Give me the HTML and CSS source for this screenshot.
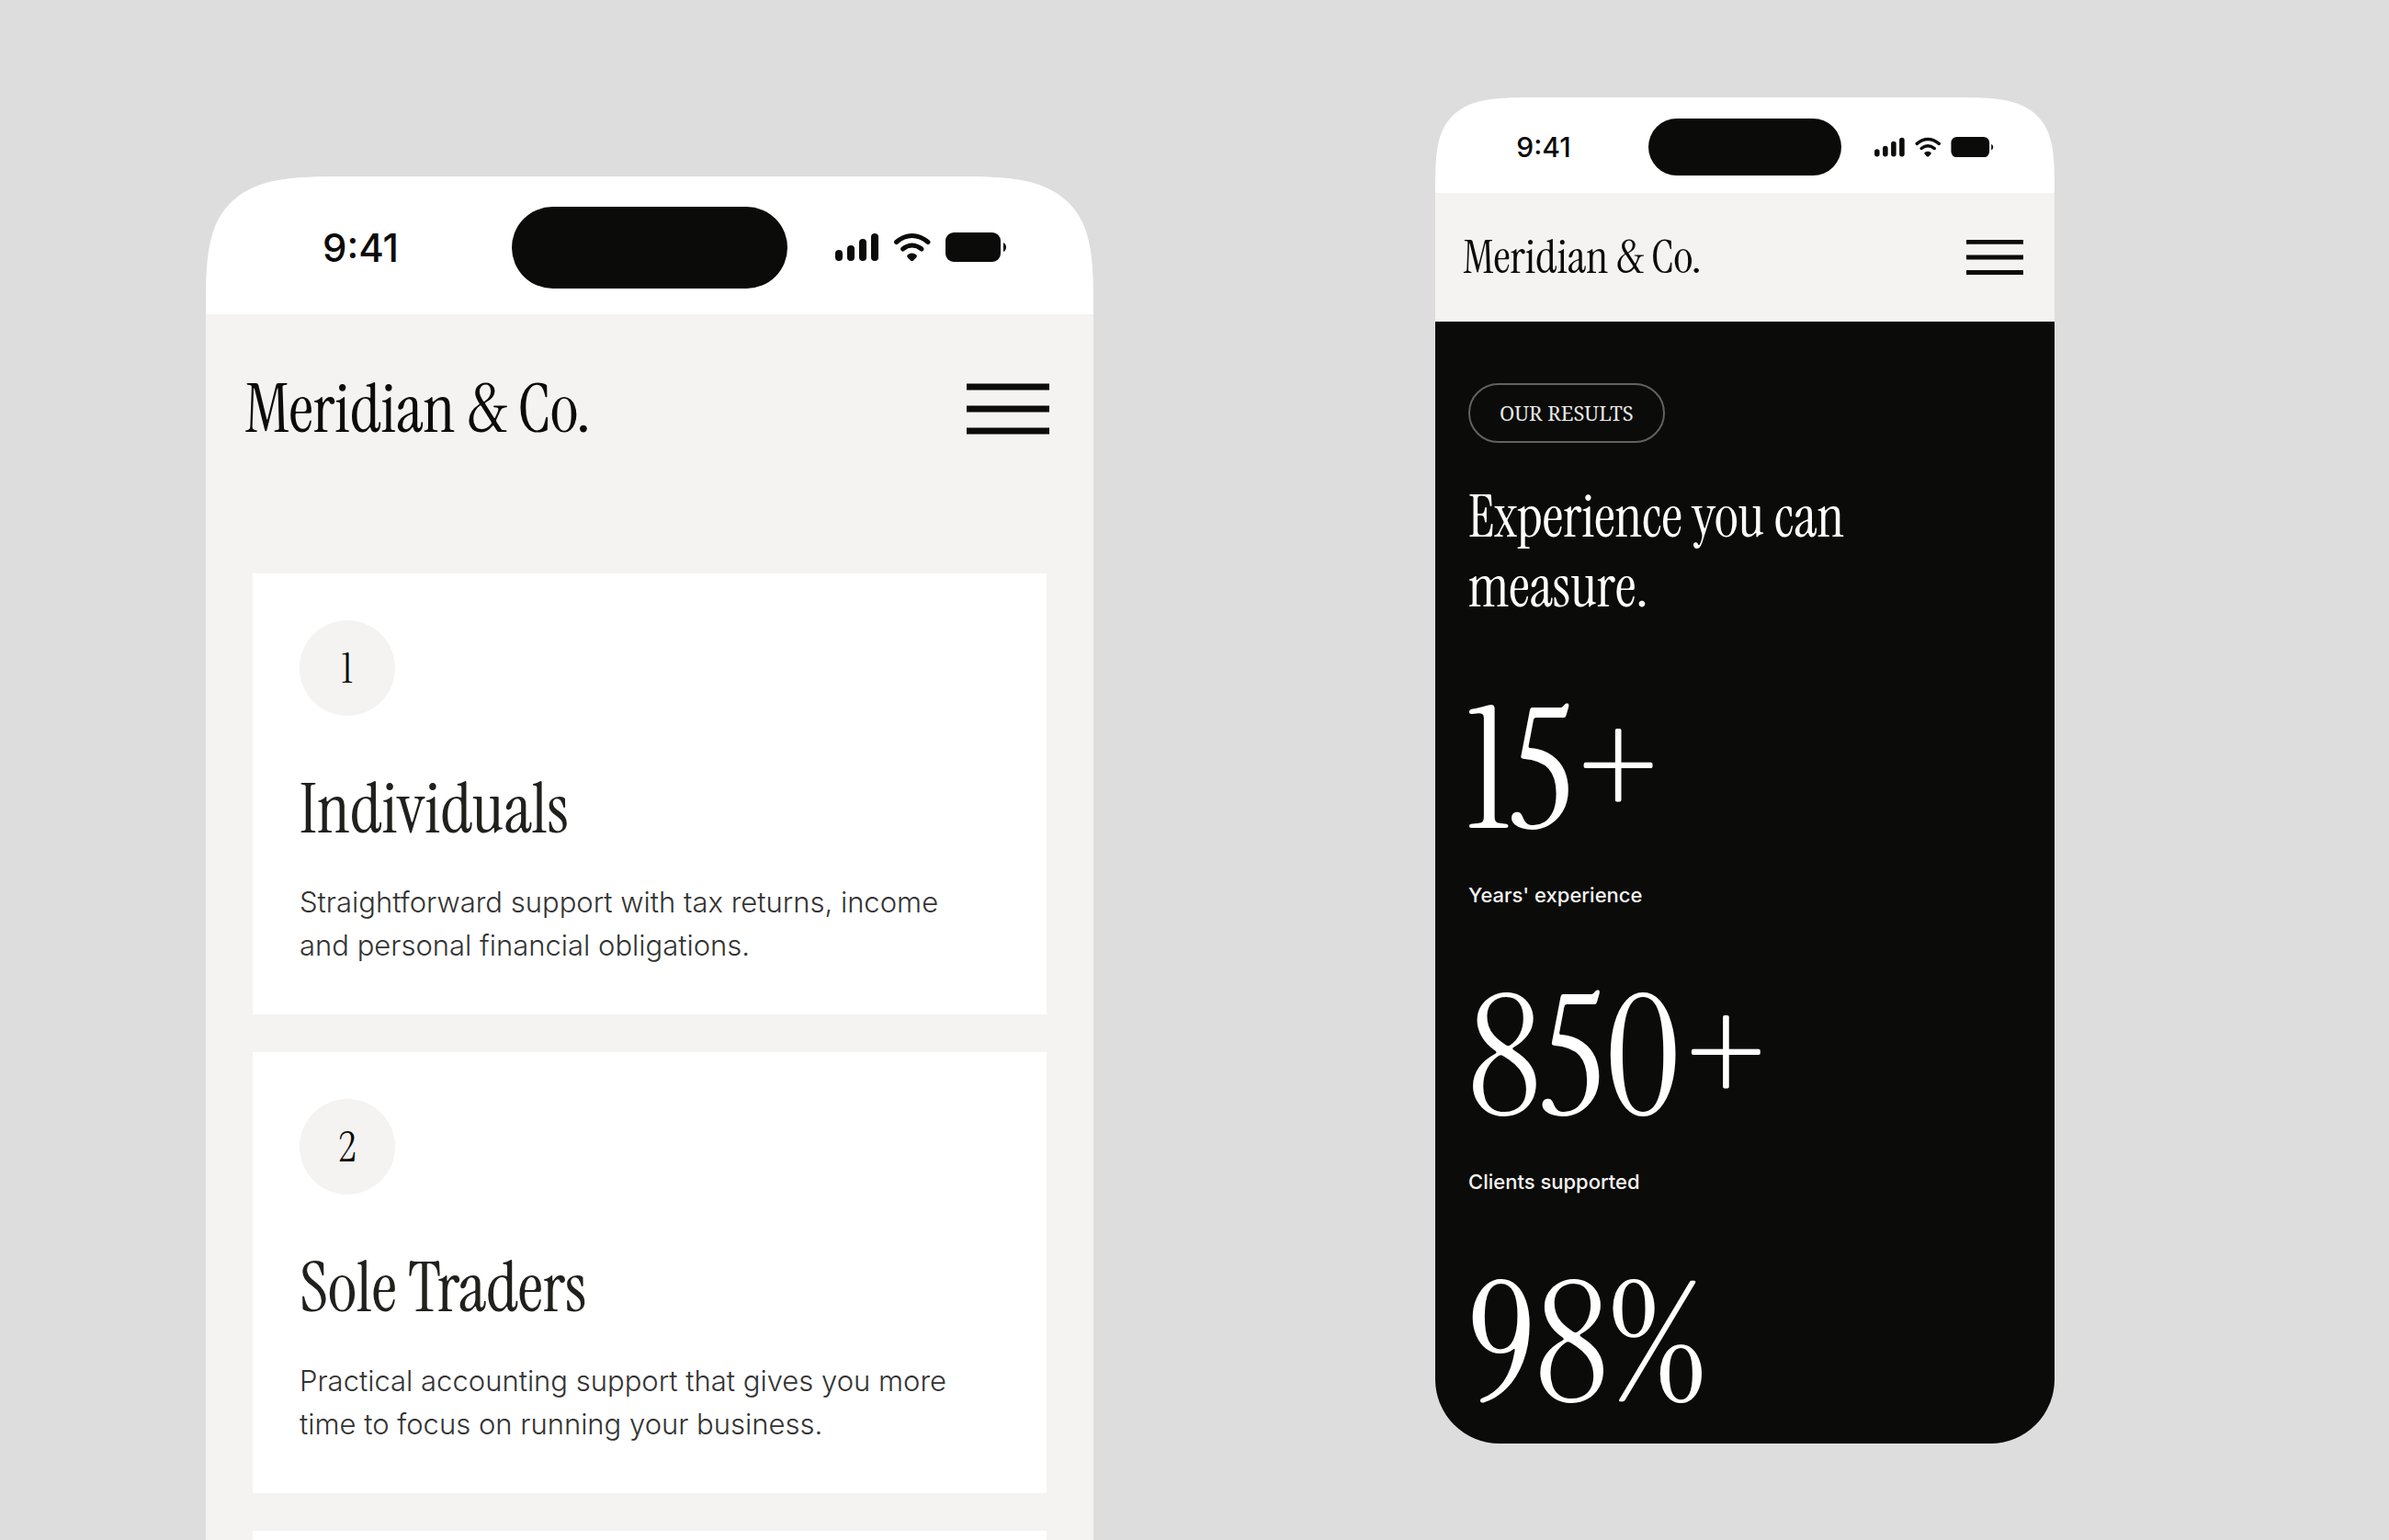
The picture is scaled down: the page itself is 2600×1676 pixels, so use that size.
FILE: index.html
```html
<!DOCTYPE html>
<html lang="en">
<head>
<meta charset="UTF-8">
<meta name="viewport" content="width=device-width, initial-scale=1.0">
<title>Meridian &amp; Co.</title>
<link rel="stylesheet" href="styles.css">
</head>
<body>
<main class="stage">

  <section class="phone phone-large">
    <div class="status">
      <span class="time">9:41</span>
      <span class="island"></span>
      <svg class="status-icons" viewBox="0 0 187 32" aria-hidden="true">
        <rect x="0" y="19" width="8" height="12" rx="4"/>
        <rect x="13" y="14" width="8" height="17" rx="4"/>
        <rect x="26" y="7" width="8" height="24" rx="4"/>
        <rect x="39" y="1" width="8" height="30" rx="4"/>
        <path class="wave" d="M66.500 10.500Q83.500 -3.500 101 10.500"/>
        <path class="wave" d="M73.500 18Q83.500 10 94 18"/>
        <path d="M78.500 24.500Q83.500 20.500 88.500 24.500Q89.500 26 88 27.500L85 30.500Q83.500 31.500 82 30.500L79 27.500Q77.500 26 78.500 24.500Z"/>
        <rect x="120" y="0" width="60" height="32" rx="9"/>
        <path d="M183 11Q186 12.500 186 16Q186 19.500 183 21Z"/>
      </svg>
    </div>
    <header class="header">
      <a class="logo" href="#">Meridian &amp; Co.</a>
      <button class="menu" type="button" aria-label="Menu">
        <svg viewBox="0 0 90 58" aria-hidden="true">
          <path d="M1 5H89M1 29H89M1 53H89"/>
        </svg>
      </button>
    </header>
    <div class="cards">
      <article class="card">
        <span class="num">1</span>
        <h2>Individuals</h2>
        <p>Straightforward support with tax returns, income and personal financial obligations.</p>
      </article>
      <article class="card">
        <span class="num">2</span>
        <h2>Sole Traders</h2>
        <p>Practical accounting support that gives you more time to focus on running your business.</p>
      </article>
      <article class="card"></article>
    </div>
  </section>

  <section class="phone phone-small">
    <div class="status">
      <span class="time">9:41</span>
      <span class="island"></span>
      <svg class="status-icons" viewBox="0 0 187 32" aria-hidden="true">
        <rect x="0" y="19" width="8" height="12" rx="4"/>
        <rect x="13" y="14" width="8" height="17" rx="4"/>
        <rect x="26" y="7" width="8" height="24" rx="4"/>
        <rect x="39" y="1" width="8" height="30" rx="4"/>
        <path class="wave" d="M66.500 10.500Q83.500 -3.500 101 10.500"/>
        <path class="wave" d="M73.500 18Q83.500 10 94 18"/>
        <path d="M78.500 24.500Q83.500 20.500 88.500 24.500Q89.500 26 88 27.500L85 30.500Q83.500 31.500 82 30.500L79 27.500Q77.500 26 78.500 24.500Z"/>
        <rect x="120" y="0" width="60" height="32" rx="9"/>
        <path d="M183 11Q186 12.500 186 16Q186 19.500 183 21Z"/>
      </svg>
    </div>
    <header class="header">
      <a class="logo" href="#">Meridian &amp; Co.</a>
      <button class="menu" type="button" aria-label="Menu">
        <svg viewBox="0 0 90 58" aria-hidden="true">
          <path d="M1 5H89M1 29H89M1 53H89"/>
        </svg>
      </button>
    </header>
    <div class="results">
      <span class="badge">OUR RESULTS</span>
      <h1>Experience you can measure.</h1>
      <div class="stats">
        <div class="stat">
          <strong>15+</strong>
          <span>Years' experience</span>
        </div>
        <div class="stat">
          <strong>850+</strong>
          <span>Clients supported</span>
        </div>
        <div class="stat">
          <strong>98%</strong>
        </div>
      </div>
    </div>
  </section>

</main>
</body>
</html>
```
FILE: styles.css
```css
* {
  box-sizing: border-box;
}
body {
  margin: 0;
  background: #dddddd;
  color: #0b0b09;
  font-family: Inter, sans-serif;
}
h1, h2, p {
  margin: 0;
  font-weight: 400;
}
.stage {
  display: grid;
  grid-template-columns: 966fr 674fr;
  column-gap: 372px;
  align-items: start;
  height: 100vh;
  padding: 0 364px 0 224px;
  overflow: hidden;
}
.phone {
  background: #f4f3f1;
}
.phone-large {
  margin-top: 192px;
  border-radius: 97px 97px 0 0;
}
.phone-small {
  margin-top: 106px;
  border-radius: 68px;
}

/* status bar */
.status {
  display: grid;
  grid-template-columns: 1fr auto 1fr;
  align-items: center;
  padding-top: 4px;
  background: #ffffff;
}
.time {
  padding-left: 4px;
  text-align: center;
  font-weight: 500;
}
.island {
  background: #0b0b09;
  border-radius: 50px;
}
.status-icons {
  display: block;
  fill: #0b0b09;
}
.wave {
  fill: none;
  stroke: #0b0b09;
  stroke-width: 5;
  stroke-linecap: round;
}
.phone-large .status {
  height: 150px;
  border-radius: 97px 97px 0 0;
}
.phone-large .time {
  font-size: 42px;
}
.phone-large .island {
  width: 300px;
  height: 89px;
}
.phone-large .status-icons {
  width: 187px;
  margin-left: 52px;
}
.phone-small .status {
  height: 104px;
  border-radius: 68px 68px 0 0;
}
.phone-small .time {
  font-size: 30px;
}
.phone-small .island {
  width: 210px;
  height: 62px;
}
.phone-small .status-icons {
  width: 130px;
  margin-left: 36px;
}
/* smooth corners of the device */
@supports (corner-shape: squircle) {
  .phone-large, .phone-large .status {
    border-radius: 160px 160px 0 0 / 150px 150px 0 0;
    corner-shape: superellipse(1.8);
  }
  .phone-small, .phone-small .status {
    border-radius: 112px 112px 0 0 / 104px 104px 0 0;
    corner-shape: superellipse(1.8);
  }
  .phone-small {
    background: none;
  }
}

/* header */
.header {
  display: flex;
  align-items: center;
  justify-content: space-between;
  background: #f4f3f1;
}
.logo {
  color: #0b0b09;
  font-family: "Instrument Serif", "Liberation Serif", serif;
  text-decoration: none;
}
.menu {
  padding: 0;
  border: 0;
  background: none;
  cursor: pointer;
}
.menu svg {
  display: block;
  width: 100%;
  stroke: #0b0b09;
  stroke-width: 7;
  stroke-linecap: round;
}
.phone-large .header {
  height: 206px;
  padding: 0 48px 0 42px;
}
.phone-large .logo {
  font-size: 74px;
}
.phone-large .menu {
  width: 90px;
}
.phone-small .header {
  height: 140px;
  padding: 0 34px 0 30px;
}
.phone-small .logo {
  font-size: 51px;
}
.phone-small .menu {
  width: 62px;
}

/* service cards */
.cards {
  display: flex;
  flex-direction: column;
  gap: 41px;
  padding: 76px 51px;
}
.card {
  min-height: 480px;
  padding: 51px;
  background: #ffffff;
}
.num {
  display: flex;
  align-items: center;
  justify-content: center;
  width: 104px;
  height: 104px;
  border-radius: 50%;
  background: #f4f3f1;
  font-family: "Instrument Serif", "Liberation Serif", serif;
  font-size: 46px;
}
.card h2 {
  margin-top: 70px;
  color: #20201d;
  font-family: "Instrument Serif", "Liberation Serif", serif;
  font-size: 76px;
  line-height: 64px;
}
.card p {
  max-width: 740px;
  margin-top: 45px;
  color: #333333;
  font-size: 31px;
  font-weight: 300;
  line-height: 47px;
}

/* results */
.results {
  padding: 67px 36px 28px;
  border-radius: 0 0 70px 70px;
  background: #0b0b09;
  color: #ffffff;
}
.badge {
  display: inline-block;
  padding: 0 32px;
  border: 2px solid #62625f;
  border-radius: 33px;
  color: #e8e8e6;
  font-family: "Noto Serif", "Liberation Serif", serif;
  font-size: 22px;
  line-height: 61px;
  vertical-align: top;
}
.results h1 {
  max-width: 480px;
  margin-top: 43px;
  font-family: "Instrument Serif", "Liberation Serif", serif;
  font-size: 63px;
  line-height: 76px;
}
.stats {
  display: flex;
  flex-direction: column;
  gap: 82px;
  margin-top: 82px;
}
.stat strong {
  display: block;
  font-family: "Instrument Serif", "Liberation Serif", serif;
  font-size: 182px;
  font-weight: 400;
  line-height: 160px;
}
.stat span {
  display: block;
  margin-top: 40px;
  color: #f4f3f1;
  font-size: 22px;
  font-weight: 500;
  line-height: 30px;
}
```
